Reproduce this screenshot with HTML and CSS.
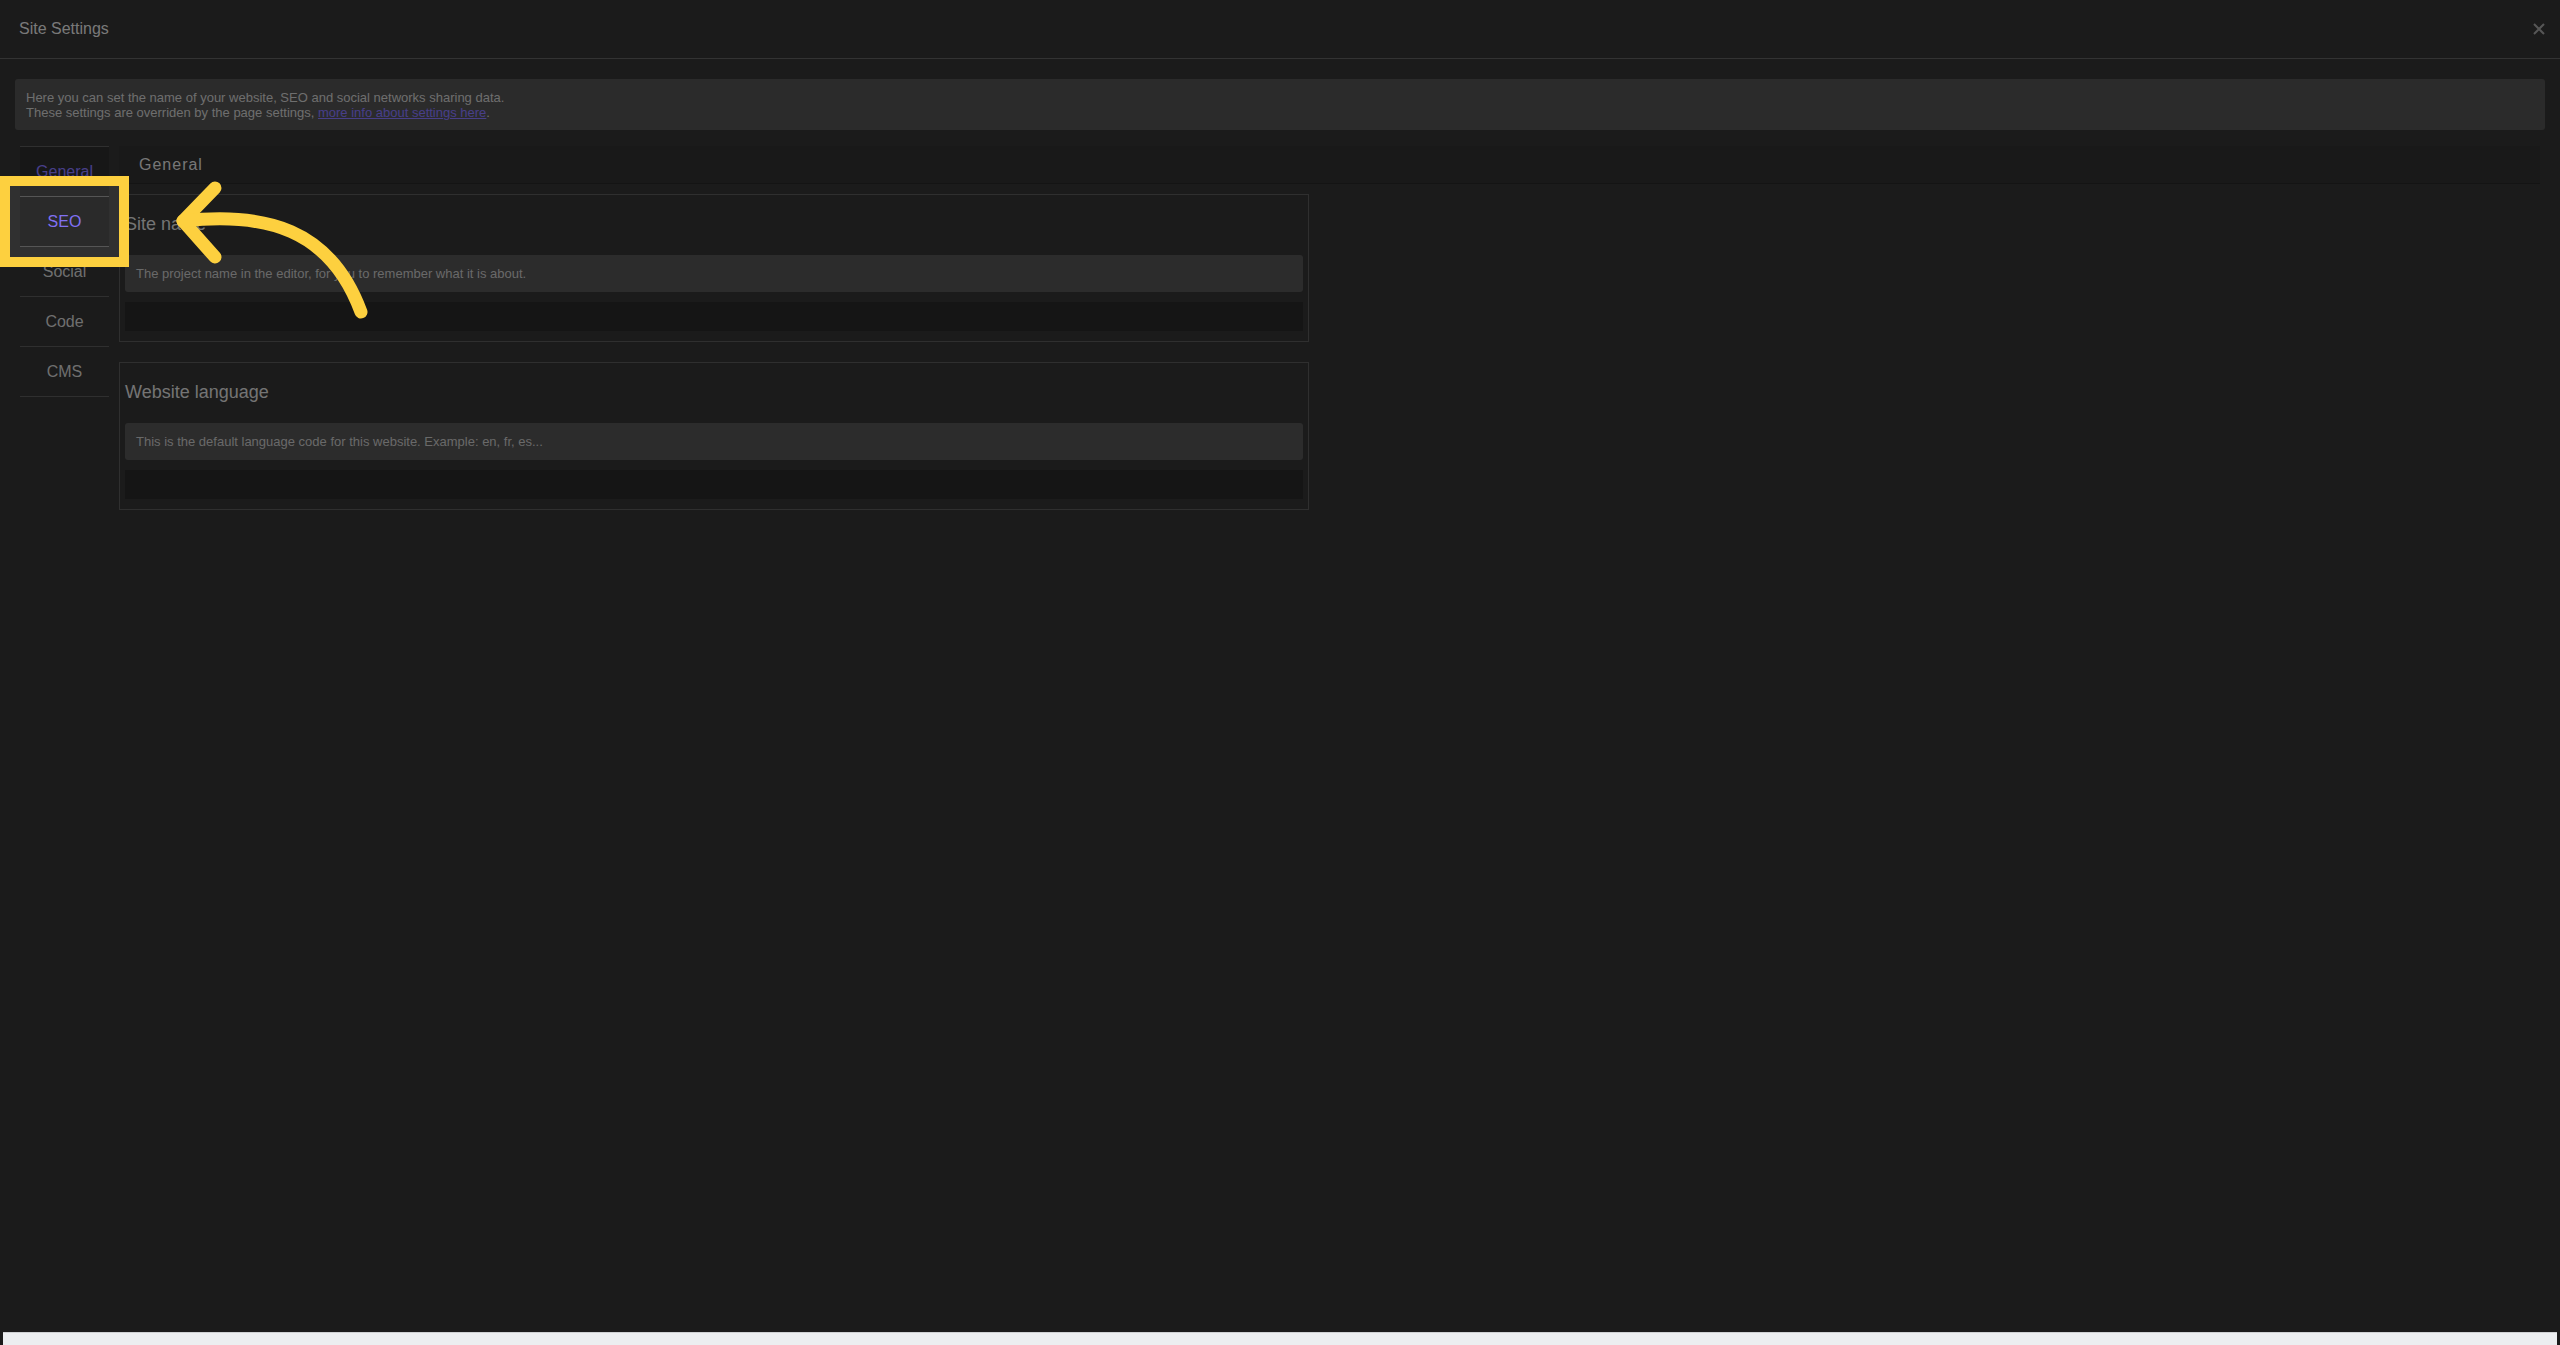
FILE: index.html
```html
<!DOCTYPE html>
<html lang="en">
<head>
<meta charset="utf-8">
<title>Site Settings</title>
<link rel="stylesheet" href="styles.css">
</head>
<body>
<div class="app">
  <header class="header">
    <span class="title">Site Settings</span>
    <button class="close" aria-label="Close">
      <svg width="12" height="12" viewBox="0 0 12 12"><path d="M1 1 L11 11 M11 1 L1 11"/></svg>
    </button>
  </header>
  <main class="main">
    <div class="info">Here you can set the name of your website, SEO and social networks sharing data.<br>These settings are overriden by the page settings, <a href="#">more info about settings here</a>.</div>
    <div class="body">
      <nav class="nav">
        <a class="nav-item active" href="#">General</a>
        <a class="nav-item active" href="#">SEO</a>
        <a class="nav-item" href="#">Social</a>
        <a class="nav-item" href="#">Code</a>
        <a class="nav-item" href="#">CMS</a>
      </nav>
      <section class="content">
        <div class="bar">General</div>
        <div class="field">
          <h3 class="field-title">Site name</h3>
          <p class="desc">The project name in the editor, for you to remember what it is about.</p>
          <div class="input"></div>
        </div>
        <div class="field">
          <h3 class="field-title">Website language</h3>
          <p class="desc">This is the default language code for this website. Example: en, fr, es...</p>
          <div class="input"></div>
        </div>
      </section>
    </div>
  </main>
  <div class="spotlight"></div>
  <svg class="arrow" width="400" height="340" viewBox="0 0 400 340">
    <path d="M215 188 L183 221 L215 257"/>
    <path d="M183 221 C265 212 330 228 361 312"/>
  </svg>
</div>
<div class="strip"></div>
</body>
</html>
```

FILE: styles.css
```css
html, body {
  margin: 0;
  padding: 0;
  background: #1b1b1b;
}

body {
  font-family: "Liberation Sans", Arial, sans-serif;
}

.app {
  position: relative;
  height: 1332px;
  overflow: hidden;
  background: #303030;
  color: #c8c8c8;
}

.header {
  height: 58px;
  border-bottom: 1px solid #5b5b5b;
  display: flex;
  align-items: center;
  justify-content: space-between;
  padding: 0 15px 0 19px;
}

.title {
  font-size: 16px;
  color: #d8d8d8;
  line-height: 18px;
}

.close {
  background: none;
  border: 0;
  padding: 0;
  width: 12px;
  height: 12px;
  display: flex;
  cursor: pointer;
}

.close svg path {
  stroke: #9a9a9a;
  stroke-width: 2;
  fill: none;
}

.main {
  padding: 20px 15px 0;
}

.info {
  background: #4d4d4d;
  border-radius: 3px;
  padding: 11px 11px 10px;
  font-size: 13px;
  line-height: 15px;
  color: #c4c4c4;
}

.info a {
  color: #8070f2;
}

.body {
  display: flex;
  gap: 10px;
  padding: 0 5px;
  margin-top: 16px;
}

.nav {
  width: 89px;
  flex: none;
  display: flex;
  flex-direction: column;
  border-top: 1px solid #555;
}

.nav-item {
  height: 49px;
  border-bottom: 1px solid #555;
  display: flex;
  align-items: center;
  justify-content: center;
  font-size: 16px;
  color: #c6c6c6;
  text-decoration: none;
}

.nav-item.active {
  background: #2a2a2a;
  color: #8070f2;
}

.content {
  flex: 1;
  min-width: 0;
}

.bar {
  height: 37px;
  background: #2d2d2d;
  border-bottom: 1px solid #242424;
  display: flex;
  align-items: center;
  padding-left: 20px;
  font-size: 16px;
  letter-spacing: 1px;
  color: #d4d4d4;
}

.field {
  width: 1178px;
  border: 1px solid #545454;
  padding: 0 5px 10px;
  margin-top: 10px;
}

.field + .field {
  margin-top: 20px;
}

.field-title {
  margin: 19px 0 20px;
  font-size: 18px;
  font-weight: normal;
  line-height: 21px;
  color: #cfcfcf;
}

.desc {
  margin: 0;
  background: #4f4f4f;
  border-radius: 3px;
  padding: 11px 11px 11px;
  font-size: 13px;
  line-height: 15px;
  color: #bcbcbc;
}

.input {
  margin-top: 10px;
  height: 29px;
  background: #272727;
}

.spotlight {
  position: absolute;
  left: 0;
  top: 176px;
  width: 109px;
  height: 71px;
  border: 10px solid #fdd03f;
  box-shadow: 0 0 0 4000px rgba(0, 0, 0, 0.44);
  pointer-events: none;
}

.arrow {
  position: absolute;
  left: 0;
  top: 0;
  pointer-events: none;
}

.arrow path {
  fill: none;
  stroke: #fdd03f;
  stroke-width: 13;
  stroke-linecap: round;
  stroke-linejoin: round;
}

.strip {
  margin: 0 3px;
  height: 12px;
  background: #eceef0;
  border-top: 1px solid #cfd1d3;
}
```
